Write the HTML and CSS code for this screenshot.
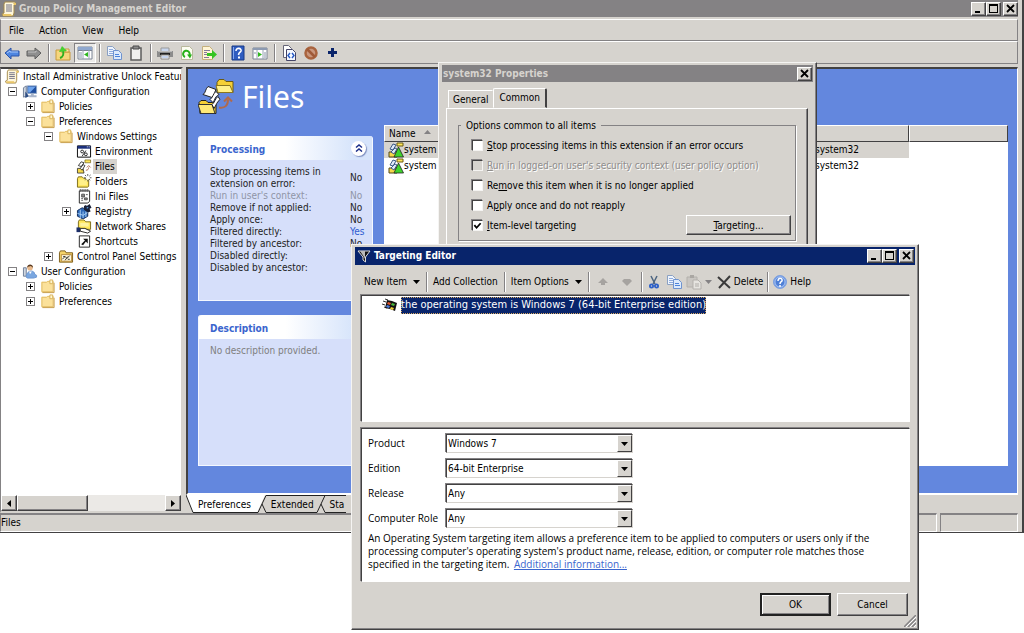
FILE: index.html
```html
<!DOCTYPE html>
<html lang="en">
<head>
<meta charset="utf-8">
<title>Group Policy Management Editor</title>
<link rel="stylesheet" href="styles.css">
</head>
<body>
<svg class="sprite" aria-hidden="true">
  <symbol id="scroll" viewBox="0 0 16 16"><path d="M4 1h10l1 2-2 1v8l-1 3H2l-1-2 2-1V3z" fill="#fff7dc" stroke="#a48a4c"/><path d="M5 4h6M5 6h6M5 8h6M5 10h6" stroke="#6f6f86"/><path d="M2 13h8l1 2H2zM12 2h3v2h-2z" fill="#e9c567"/></symbol>
  <symbol id="folder" viewBox="0 0 16 16"><path d="M1 3h6l1-1h2v12H1z" fill="#f8dc86"/><path d="M1.500 3.500h5l1-1h6v11h-12z" fill="#fbe19a" stroke="#e2bd66"/><path d="M10 1h3v4h-3z" fill="#fff6cf" stroke="#d9b25a"/><path d="M14.500 4v10.500H2" fill="none" stroke="#c59a45"/></symbol>
  <symbol id="computer" viewBox="0 0 16 16"><path d="M5 2h10v8H5z" fill="#1f4e9e" stroke="#8fa5c5"/><path d="M6 3h8L8 9H6z" fill="#6fa4ec"/><path d="M9 10h3v2h3v2H7v-2h2z" fill="#a7b4ca"/><path d="M1 4l3-2v11l-3 1z" fill="#cfd6e0" stroke="#6d7c95"/><path d="M3 8l4 5-4 2z" fill="#2c4c83"/></symbol>
  <symbol id="user" viewBox="0 0 16 16"><path d="M1 4h3v9H1z" fill="#cfd6e0" stroke="#6d7c95"/><circle cx="8" cy="4" r="3" fill="#e8b98c"/><path d="M5 4c0-5 7-4 6 0l-2-2-3 1z" fill="#5a3b22"/><path d="M4 14c0-8 9-8 9-3l2 1v2l-3 1H5z" fill="#7aa7e0" stroke="#6c96d2"/><path d="M7 8l1 3 2-3z" fill="#fff"/></symbol>
  <symbol id="env" viewBox="0 0 16 16"><path d="M1 2h14v12H1z" fill="#fff" stroke="#000"/><path d="M1 2h14v3H1z" fill="#1b2f7c"/><path d="M11 3h1M13 3h1" stroke="#fff"/><circle cx="6" cy="8" r="1.500" fill="none" stroke="#222"/><circle cx="10" cy="11" r="1.500" fill="none" stroke="#222"/><path d="M10 7l-4 6" stroke="#222"/></symbol>
  <symbol id="files" viewBox="0 0 36 36"><path d="M19 4l2-3h5l2 2h7v11H19z" fill="#f5cf35" stroke="#6a5a14"/><path d="M18 7h14l3 7H20z" fill="#fff08a" stroke="#8a7620"/><path d="M1 24l2-2h5l2 2h8v11H2z" fill="#f5cf35" stroke="#222"/><path d="M0 26h14l3 9H3z" fill="#ffe976" stroke="#333"/><path d="M10 8l8 3c-2 3-1 6-4 8l-9-3c3-2 2-5 5-8z" fill="#fff" stroke="#222"/><path d="M18 13c-3 2-3 6-6 8l3 3c2-3 2-6 6-8zM20 18c-3 2-3 6-6 8l2 4c2-3 3-7 6-9z" fill="#fff" stroke="#222"/><path d="M21 29c6 1 9-2 9-8M26 23l4-4 4 4" fill="none" stroke="#b06a4c" stroke-width="2"/></symbol>
  <symbol id="filessmall" viewBox="0 0 16 16"><path d="M9 1h6v3H9z" fill="#ffe65a" stroke="#6a5a14" stroke-width=".7"/><path d="M1 10h6l1 5H1z" fill="#f6d84a" stroke="#222" stroke-width=".8"/><path d="M5 3l3 1-3 4-3-1zM7 6l2 1-3 5-2-2z" fill="#fff" stroke="#222" stroke-width=".9"/><path d="M10 12c2 0 3-1 3-3M11 9l2-2 2 2" fill="none" stroke="#b06a4c"/></symbol>
  <symbol id="newfolder" viewBox="0 0 16 16"><path d="M1 5l1-2h4l2 2h5v8l-1 1H1z" fill="#ffe65a" stroke="#7b6a18"/><path d="M3 6h8v6H3z" fill="#fff08a"/><path d="M12 0v8M8 4h8M9 1l6 6M15 1L9 7" stroke="#555" stroke-dasharray="2 1"/><circle cx="12" cy="4" r="2" fill="#fff"/></symbol>
  <symbol id="ini" viewBox="0 0 16 16"><path d="M3 2h11v11l-2 2H3z" fill="#fff" stroke="#222"/><path d="M4 0v3M6 0v3M8 0v3M10 0v3M12 0v3" stroke="#555"/><path d="M5.500 5.500h3v3h-3zM8.500 9.500h3v2h-3z" fill="#888" stroke="#555"/><path d="M10 6h2M5 10h2M5 12h2" stroke="#555"/></symbol>
  <symbol id="registry" viewBox="0 0 16 16"><path d="M1 7l5-3 6 2v7l-5 3-6-3z" fill="#2d68b8" stroke="#102a58"/><path d="M1 10l6 2 5-3M4 6v9M7 8v7M10 8v6" fill="none" stroke="#a9d0f5"/><path d="M8 2l2-1 1 1 3-2 2 4-2 1 1 3-3 1-4-3z" fill="#182038"/><path d="M11 3l2 1-2 1z" fill="#5fa3ea"/></symbol>
  <symbol id="share" viewBox="0 0 16 16"><path d="M2 3l1-2h5l2 2h5v8H2z" fill="#ffe65a" stroke="#7b6a18"/><path d="M4 4h9v4H4z" fill="#fff3a0"/><path d="M0 9h4v5H0z" fill="#1c2f6a"/><path d="M4 10h5l4 2 2 1-3 2-8-2z" fill="#fff" stroke="#222"/></symbol>
  <symbol id="shortcut" viewBox="0 0 16 16"><path d="M3 2h11v12H3z" fill="#fff" stroke="#222"/><path d="M7 5h5v5l-2-2-3 4-2-1 4-4z" fill="#111"/></symbol>
  <symbol id="cpanel" viewBox="0 0 16 16"><path d="M1 4l1-2h5l1 2h7v10H1z" fill="#f6d469" stroke="#7b5b18"/><path d="M3 6h11v7H3z" fill="#fff8dd" stroke="#b58a3c"/><path d="M4 11l3-3 2 2 3-3M7 12l3-4M5 8h2M10 11h2" fill="none" stroke="#333"/></symbol>
  <symbol id="back" viewBox="0 0 16 16"><path d="M1 8l6-5v3h8v5H7v3z" fill="#4f86e0" stroke="#2c55a8"/><path d="M3 8l3-2v1h8" fill="none" stroke="#a8c8fa"/></symbol>
  <symbol id="forward" viewBox="0 0 16 16"><path d="M15 8L9 3v3H1v5h8v3z" fill="#8f8f8f" stroke="#5e5e5e"/><path d="M2 7h8V6" fill="none" stroke="#c4c4c4"/></symbol>
  <symbol id="upfolder" viewBox="0 0 16 16"><path d="M1 5h4l1 2h9v8H1z" fill="#f6d67c" stroke="#c89a3c"/><path d="M10 4h4v3h-4z" fill="#fbe7a4" stroke="#c89a3c"/><path d="M5 13c3-1 4-4 3-7" fill="none" stroke="#2fae20" stroke-width="2"/><path d="M4 7l3-6 5 5z" fill="#48d030"/></symbol>
  <symbol id="treepane" viewBox="0 0 16 16"><path d="M1 2h14v12H1z" fill="#fff" stroke="#7b8494"/><path d="M1 2h14v3H1z" fill="#8fa8cf"/><path d="M1 5.500h14" stroke="#7b8494"/><path d="M6 5v9M12 5v9" stroke="#9aa4b6"/><path d="M2 8h3M2 10h3M2 12h3" stroke="#8894a8"/><path d="M11 7v5L7 9.500z" fill="#2fb81e"/></symbol>
  <symbol id="actionpane" viewBox="0 0 16 16"><path d="M1 3h14v11H1z" fill="#fff" stroke="#7b8494"/><path d="M1 3h14v2H1z" fill="#8d9bb2"/><path d="M5 5v9M11 5v9" stroke="#9aa4b6"/><path d="M12 8h2M12 10h2M12 12h2M2 8h2" stroke="#8894a8"/><path d="M6 7v5l4-2.500z" fill="#2fb81e"/></symbol>
  <symbol id="copy" viewBox="0 0 16 16"><path d="M1.500 1.500h5l3 3v6h-8z" fill="#eef4fd" stroke="#8aa0c2"/><path d="M3 4.500h4M3 6.500h5M3 8.500h5" stroke="#8fabdd"/><path d="M7.500 5.500h5l3 3v6h-8z" fill="#dceafc" stroke="#6f93cf"/><path d="M9 9.500h4M9 11.500h5" stroke="#4d83db"/></symbol>
  <symbol id="clipboard" viewBox="0 0 16 16"><path d="M3 3h10v12H3z" fill="#f0f0ee" stroke="#5c5c5c" stroke-width="1.500"/><path d="M5 1h6v3H5z" fill="#8c8c8c" stroke="#4b4b4b"/></symbol>
  <symbol id="printer" viewBox="0 0 16 16"><path d="M4 3h8v4H4z" fill="#c8d6ee" stroke="#999"/><path d="M0 6h16v6H0z" fill="#8c8c8c"/><path d="M1 6h14v1H1z" fill="#bbb"/><path d="M3 8h10v2H3z" fill="#222"/><path d="M4 10h8v4H4z" fill="#fff" stroke="#888"/><path d="M5 12h6" stroke="#8aa8de"/></symbol>
  <symbol id="refresh" viewBox="0 0 16 16"><path d="M2.500 1.500h8l3 3v10h-11z" fill="#fdfdf2" stroke="#b9b99d"/><path d="M6 12a3.300 3.300 0 1 1 4-1" fill="none" stroke="#26b018" stroke-width="2"/><path d="M8 9.500h5l-2 4z" fill="#26b018"/></symbol>
  <symbol id="export" viewBox="0 0 16 16"><path d="M1.500 1.500h7l3 3v10h-10z" fill="#fff5d5" stroke="#c4b07c"/><path d="M3 5.500h6M3 7.500h3M3 9.500h3M3 12.500h5" stroke="#857a99"/><path d="M6 8h5V5l5 4.500-5 4.500v-3H6z" fill="#35c522"/></symbol>
  <symbol id="helpbook" viewBox="0 0 16 16"><path d="M2 1h12v14H2z" fill="#2f5cc0" stroke="#193a86"/><path d="M3 2h1v12H3z" fill="#84a8ee"/><path d="M6 6c0-4 6-3 5 0-1 2-2 1-2.500 4" fill="none" stroke="#fff" stroke-width="1.600"/><path d="M8 11.500h2v2H8z" fill="#fff"/></symbol>
  <symbol id="code" viewBox="0 0 16 16"><path d="M2.500.5h5l3 3v9h-8z" fill="#fff" stroke="#667"/><path d="M5.500 4.500h6l3 3v8h-9z" fill="#f4f8ff" stroke="#446"/><path d="M9 8l-2 2.500L9 13M11 8l2 2.500-2 2.500" fill="none" stroke="#2458c4" stroke-width="1.400"/></symbol>
  <symbol id="no" viewBox="0 0 16 16"><circle cx="8" cy="8" r="5.500" fill="#c9977e" stroke="#a9643f" stroke-width="2.500"/><path d="M4 4l8 8" stroke="#a05a38" stroke-width="2.500"/></symbol>
  <symbol id="plus" viewBox="0 0 16 16"><path d="M6 3h3v3h3v3H9v3H6V9H3V6h3z" fill="#0a246a"/></symbol>
  <symbol id="listitem" viewBox="0 0 16 16"><path d="M1 10h8v5H1z" fill="#f6d84a" stroke="#55481a"/><path d="M5 2l3 1-3 5-3-1zM7 6l2 1-3 5-3-2z" fill="#dfe9fa" stroke="#3c5a86"/><path d="M9 1h6v3H9z" fill="#ffe65a" stroke="#6a5a14"/><path d="M10.500 5l5 10H6z" fill="#3fd42c" stroke="#222" stroke-width=".8"/></symbol>
  <symbol id="funnel" viewBox="0 0 16 16"><path d="M2 3h12L9.500 9v5L7 12V9z" fill="#111" stroke="#ddd"/><path d="M4 3h5v8L8 9z" fill="#bbb"/></symbol>
  <symbol id="arrowup" viewBox="0 0 16 16"><path d="M8 4l5 5h-3v2H6V9H3z" fill="#a6a3a0"/></symbol>
  <symbol id="arrowdown" viewBox="0 0 16 16"><path d="M8 12L3 7l2-2h6l2 2z" fill="#a6a3a0"/></symbol>
  <symbol id="cut" viewBox="0 0 16 16"><path d="M5 2l4 8M11 2L7 10" stroke="#4c6480" stroke-width="1.500"/><circle cx="5.500" cy="12" r="1.600" fill="none" stroke="#2c5fc8" stroke-width="1.800"/><circle cx="10.500" cy="12" r="1.600" fill="none" stroke="#2c5fc8" stroke-width="1.800"/></symbol>
  <symbol id="paste" viewBox="0 0 16 16"><path d="M1 3h10v10H1z" fill="#c9c6c2" stroke="#b3b0ac"/><path d="M4 1h4v3H4z" fill="#aaa7a3"/><path d="M7 6h5l3 3v6H7z" fill="#e6e4e0" stroke="#b3b0ac"/><path d="M9 10h4M9 12h4" stroke="#b0ada9"/></symbol>
  <symbol id="delete" viewBox="0 0 16 16"><path d="M2 3l12 11M14 2L3 14" stroke="#3a3a3a" stroke-width="2"/></symbol>
  <symbol id="help" viewBox="0 0 16 16"><circle cx="8" cy="8" r="6.500" fill="#6f9ae6" stroke="#7da0de"/><circle cx="8" cy="8" r="5" fill="#4e7fd6" stroke="#c6d8f6" stroke-width=".7"/><path d="M6 7c0-4 5-3 4 0-1 1-2 1-2 3M8 11v2" fill="none" stroke="#fff" stroke-width="1.500"/></symbol>
  <symbol id="winflag" viewBox="0 0 16 16"><path d="M1 4l3 1M0 7l3 1M2 10l3 1M3 2l3 1" stroke="#333"/><path d="M5 3l5 1 5 2-2 8-5-2-5-1z" fill="#111"/><path d="M6 5l3 1-1 2-3-1z" fill="#e0542c"/><path d="M10 6l3 1-1 2-3-1z" fill="#49b83a"/><path d="M5 8l3 1-1 2-3-1z" fill="#4b7ce0"/><path d="M9 10l3 1-1 2-3-1z" fill="#f2cf3a"/></symbol>
  <symbol id="min" viewBox="0 0 10 10"><path d="M1 7h5v2H1z" fill="#000"/></symbol>
  <symbol id="max" viewBox="0 0 10 10"><path d="M0 0h9v9H0zM1 2v6h7V2z" fill="#000" fill-rule="evenodd"/></symbol>
  <symbol id="close" viewBox="0 0 10 10"><path d="M1 1l7 7M8 1L1 8" stroke="#000" stroke-width="1.800"/></symbol>
  <symbol id="down" viewBox="0 0 7 4"><path d="M0 0h7L3.500 4z" fill="currentColor"/></symbol>
</svg>

<main class="app">
  <header class="titlebar inactive">
    <svg class="icon"><use href="#scroll"/></svg>
    <h1 class="title">Group Policy Management Editor</h1>
    <div class="winbtns">
      <button class="winbtn" aria-label="Minimize"><svg><use href="#min"/></svg></button>
      <button class="winbtn" aria-label="Maximize"><svg><use href="#max"/></svg></button>
      <button class="winbtn last" aria-label="Close"><svg><use href="#close"/></svg></button>
    </div>
  </header>
  <nav class="menubar">
    <button>File</button><button>Action</button><button>View</button><button>Help</button>
  </nav>
  <div class="toolbar">
    <button aria-label="Back"><svg class="icon"><use href="#back"/></svg></button>
    <button aria-label="Forward"><svg class="icon"><use href="#forward"/></svg></button>
    <i class="sep"></i>
    <button aria-label="Up"><svg class="icon"><use href="#upfolder"/></svg></button>
    <button class="pressed" aria-label="Show tree"><svg class="icon"><use href="#treepane"/></svg></button>
    <i class="sep"></i>
    <button aria-label="Copy"><svg class="icon"><use href="#copy"/></svg></button>
    <button aria-label="Paste"><svg class="icon"><use href="#clipboard"/></svg></button>
    <i class="sep"></i>
    <button aria-label="Print"><svg class="icon"><use href="#printer"/></svg></button>
    <button aria-label="Refresh"><svg class="icon"><use href="#refresh"/></svg></button>
    <button aria-label="Export list"><svg class="icon"><use href="#export"/></svg></button>
    <i class="sep"></i>
    <button aria-label="Help topics"><svg class="icon"><use href="#helpbook"/></svg></button>
    <button aria-label="Show action pane"><svg class="icon"><use href="#actionpane"/></svg></button>
    <i class="sep"></i>
    <button aria-label="View XML"><svg class="icon"><use href="#code"/></svg></button>
    <button aria-label="Disable"><svg class="icon"><use href="#no"/></svg></button>
    <button aria-label="Add"><svg class="icon"><use href="#plus"/></svg></button>
  </div>

  <div class="panes">
    <aside class="treepanel">
      <div class="tree">
        <div class="node root"><svg class="icon"><use href="#scroll"/></svg><span>Install Administrative Unlock Featur</span></div>
        <ul>
          <li><div class="node"><i class="exp"></i><svg class="icon"><use href="#computer"/></svg><span>Computer Configuration</span></div>
            <ul>
              <li><div class="node"><i class="exp plus"></i><svg class="icon"><use href="#folder"/></svg><span>Policies</span></div></li>
              <li><div class="node"><i class="exp"></i><svg class="icon"><use href="#folder"/></svg><span>Preferences</span></div>
                <ul>
                  <li><div class="node"><i class="exp"></i><svg class="icon"><use href="#folder"/></svg><span>Windows Settings</span></div>
                    <ul>
                      <li><div class="node"><i class="exp none"></i><svg class="icon"><use href="#env"/></svg><span>Environment</span></div></li>
                      <li><div class="node"><i class="exp none"></i><svg class="icon"><use href="#filessmall"/></svg><span class="current">Files</span></div></li>
                      <li><div class="node"><i class="exp none"></i><svg class="icon"><use href="#newfolder"/></svg><span>Folders</span></div></li>
                      <li><div class="node"><i class="exp none"></i><svg class="icon"><use href="#ini"/></svg><span>Ini Files</span></div></li>
                      <li><div class="node"><i class="exp plus"></i><svg class="icon"><use href="#registry"/></svg><span>Registry</span></div></li>
                      <li><div class="node"><i class="exp none"></i><svg class="icon"><use href="#share"/></svg><span>Network Shares</span></div></li>
                      <li><div class="node"><i class="exp none"></i><svg class="icon"><use href="#shortcut"/></svg><span>Shortcuts</span></div></li>
                    </ul>
                  </li>
                  <li><div class="node"><i class="exp plus"></i><svg class="icon"><use href="#cpanel"/></svg><span>Control Panel Settings</span></div></li>
                </ul>
              </li>
            </ul>
          </li>
          <li><div class="node"><i class="exp"></i><svg class="icon"><use href="#user"/></svg><span>User Configuration</span></div>
            <ul>
              <li><div class="node"><i class="exp plus"></i><svg class="icon"><use href="#folder"/></svg><span>Policies</span></div></li>
              <li><div class="node"><i class="exp plus"></i><svg class="icon"><use href="#folder"/></svg><span>Preferences</span></div></li>
            </ul>
          </li>
        </ul>
      </div>
      <div class="hscroll">
        <button aria-label="Scroll left"><svg class="tri" viewBox="0 0 4 7"><path d="M4 0v7L0 3.500z"/></svg></button>
        <i class="thumb"></i>
        <button class="end" aria-label="Scroll right"><svg class="tri" viewBox="0 0 4 7"><path d="M0 0v7l4-3.500z"/></svg></button>
      </div>
    </aside>

    <section class="result">
      <div class="canvas">
        <div class="heading"><svg class="bigicon"><use href="#files"/></svg><h2>Files</h2></div>
        <div class="body">
          <div class="cards">
            <section class="card">
              <header><h3>Processing</h3><button class="chev" aria-label="Collapse"><svg viewBox="0 0 8 8"><path d="M1 3.500L4 1l3 2.500M1 7.500L4 5l3 2.500" fill="none" stroke="#1c2f8a" stroke-width="1.500"/></svg></button></header>
              <table>
                <tr><th>Stop processing items in<br>extension on error:</th><td>No</td></tr>
                <tr class="dim"><th>Run in user's context:</th><td>No</td></tr>
                <tr><th>Remove if not applied:</th><td>No</td></tr>
                <tr><th>Apply once:</th><td>No</td></tr>
                <tr><th>Filtered directly:</th><td class="yes">Yes</td></tr>
                <tr><th>Filtered by ancestor:</th><td>No</td></tr>
                <tr><th>Disabled directly:</th><td></td></tr>
                <tr><th>Disabled by ancestor:</th><td></td></tr>
              </table>
            </section>
            <section class="card desc">
              <header><h3>Description</h3></header>
              <p>No description provided.</p>
            </section>
          </div>
          <div class="list">
            <table>
              <colgroup><col class="c-name"><col class="c-target"><col></colgroup>
              <thead><tr><th>Name <svg class="sort" viewBox="0 0 7 4"><path d="M0 4h7L3.500 0z" fill="#848284"/></svg></th><th></th><th></th></tr></thead>
              <tbody>
                <tr class="sel"><td><svg class="icon"><use href="#listitem"/></svg>system</td><td>system32</td><td></td></tr>
                <tr><td><svg class="icon"><use href="#listitem"/></svg>system</td><td>system32</td><td></td></tr>
              </tbody>
            </table>
          </div>
        </div>
      </div>
      <div class="viewtabs">
        <svg class="slant first" viewBox="0 0 9 18"><path d="M0 0h9v18H7z" fill="#fff"/><path d="M0 0l7 17.500h2" fill="none" stroke="#222"/></svg>
        <button class="on">Preferences</button>
        <svg class="slant" viewBox="0 0 12 18"><path d="M0 0h8L0 18z" fill="#fff"/><path d="M0 17.500h1L9 .5h3M5 9l4 8.500h3" fill="none" stroke="#222"/></svg>
        <button>Extended</button>
        <svg class="slant" viewBox="0 0 12 18"><path d="M0 17.500h1L9 .5h3M0 .5h9M5 9l4 8.500h3" fill="none" stroke="#222"/></svg>
        <button>Sta</button>
      </div>
    </section>
  </div>
  <footer class="status"><span class="grow">Files</span><span class="cell"></span></footer>
</main>

<section class="dialog props" role="dialog" aria-label="system32 Properties">
  <header class="titlebar inactive">
    <h2 class="title">system32 Properties</h2>
    <div class="winbtns"><button class="winbtn" aria-label="Close"><svg><use href="#close"/></svg></button></div>
  </header>
  <div class="tabs"><button>General</button><button class="on">Common</button></div>
  <div class="tabpage">
    <fieldset>
      <legend>Options common to all items</legend>
      <label><input type="checkbox"><span><u>S</u>top processing items in this extension if an error occurs</span></label>
      <label class="off"><input type="checkbox" disabled><span><u>R</u>un in logged-on user's security context (user policy option)</span></label>
      <label><input type="checkbox"><span>Re<u>m</u>ove this item when it is no longer applied</span></label>
      <label><input type="checkbox"><span>A<u>p</u>ply once and do not reapply</span></label>
      <div class="pair">
        <label><input type="checkbox" checked><span><u>I</u>tem-level targeting</span></label>
        <button class="btn"><span><u>T</u>argeting...</span></button>
      </div>
    </fieldset>
  </div>
</section>

<section class="dialog editor" role="dialog" aria-label="Targeting Editor">
  <header class="titlebar">
    <svg class="icon"><use href="#funnel"/></svg>
    <h2 class="title">Targeting Editor</h2>
    <div class="winbtns">
      <button class="winbtn" aria-label="Minimize"><svg><use href="#min"/></svg></button>
      <button class="winbtn" aria-label="Maximize"><svg><use href="#max"/></svg></button>
      <button class="winbtn last" aria-label="Close"><svg><use href="#close"/></svg></button>
    </div>
  </header>
  <div class="edbar">
    <button>New Item <svg class="dd"><use href="#down"/></svg></button>
    <i class="sep"></i>
    <button>Add Collection</button>
    <i class="sep"></i>
    <button>Item Options <svg class="dd"><use href="#down"/></svg></button>
    <i class="sep"></i>
    <button disabled aria-label="Move up"><svg class="icon"><use href="#arrowup"/></svg></button>
    <button disabled aria-label="Move down"><svg class="icon"><use href="#arrowdown"/></svg></button>
    <i class="sep"></i>
    <button class="tight" aria-label="Cut"><svg class="icon"><use href="#cut"/></svg></button>
    <button class="tight" aria-label="Copy"><svg class="icon"><use href="#copy"/></svg></button>
    <button class="tight" disabled aria-label="Paste"><svg class="icon"><use href="#paste"/></svg><svg class="dd dim"><use href="#down"/></svg></button>
    <button class="tight"><svg class="icon"><use href="#delete"/></svg>Delete</button>
    <i class="sep"></i>
    <button class="tight"><svg class="icon"><use href="#help"/></svg>Help</button>
  </div>
  <div class="well items">
    <div class="item"><svg class="icon"><use href="#winflag"/></svg><span>the operating system is Windows 7 (64-bit Enterprise edition)</span></div>
  </div>
  <div class="well form">
    <div class="fields">
      <label for="product">Product</label><div class="combo"><select id="product"><option>Windows 7</option></select><i><svg class="dd"><use href="#down"/></svg></i></div>
      <label for="edition">Edition</label><div class="combo"><select id="edition"><option>64-bit Enterprise</option></select><i><svg class="dd"><use href="#down"/></svg></i></div>
      <label for="release">Release</label><div class="combo"><select id="release"><option>Any</option></select><i><svg class="dd"><use href="#down"/></svg></i></div>
      <label for="role">Computer Role</label><div class="combo"><select id="role"><option>Any</option></select><i><svg class="dd"><use href="#down"/></svg></i></div>
    </div>
    <p>An Operating System targeting item allows a preference item to be applied to computers or users only if the processing computer's operating system's product name, release, edition, or computer role matches those specified in the targeting item. <a href="#">Additional information...</a></p>
  </div>
  <footer class="actions"><button class="btn default">OK</button><button class="btn">Cancel</button></footer>
  <svg class="grip" viewBox="0 0 12 12"><path d="M0 12L12 0M4 12l8-8M8 12l4-4" stroke="#848284" stroke-width="1.500"/><path d="M2 12L12 2M6 12l6-6M10 12l2-2" stroke="#fff"/></svg>
</section>
</body>
</html>
```
FILE: styles.css
```css
:root {
  --face: #d6d3ce;
  --shadow: #848284;
  --dark: #424142;
  --blue: #6387de;
  --navy: #08246b;
}
* { box-sizing: border-box; }
body {
  margin: 0;
  min-height: 100vh;
  position: relative;
  overflow: hidden;
  background: #fff;
  color: #000;
  font: 10px/15px "DejaVu Sans Condensed", "Noto Sans", sans-serif;
}
button, select, input { font: inherit; color: inherit; margin: 0; }
button { padding: 0; border: 0; background: none; white-space: nowrap; }
h1, h2, h3, p, ul { margin: 0; padding: 0; }
ul { list-style: none; }
svg { flex: none; display: block; }
.sprite { display: none; }
.icon { width: 16px; height: 16px; }
.dd { width: 7px; height: 4px; }

.titlebar { display: flex; align-items: center; height: 18px; background: var(--navy); color: #fff; padding: 0 2px; gap: 2px; }
.titlebar.inactive { background: var(--shadow); color: #d6d3ce; }
.title { flex: 1; font-size: 10px; line-height: 15px; font-weight: bold; }
.winbtns { display: flex; }
.winbtn {
  width: 15px; height: 14px; display: grid; place-items: center; background: var(--face);
  border: 1px solid; border-color: #fff var(--dark) var(--dark) #fff; box-shadow: inset -1px -1px var(--shadow);
}
.winbtn svg { width: 10px; height: 10px; }
.winbtn.last { margin-left: 2px; }

.app { display: flex; flex-direction: column; height: 533px; background: var(--face); padding-right: 4px; border-right: 2px solid var(--dark); border-bottom: 1px solid var(--dark); }
.app > .titlebar { height: 17px; padding-left: 1px; padding-right: 0; }
.menubar { display: flex; gap: 15px; height: 22px; margin-top: 2px; padding: 0 0 0 8px; border: 1px solid; border-color: #fff var(--shadow) var(--shadow) var(--shadow); }
.toolbar { display: flex; align-items: center; height: 23px; border: 1px solid; border-color: #fff var(--shadow) var(--shadow) var(--shadow); }
.toolbar button { width: 22px; height: 20px; display: grid; place-items: center; }
.toolbar .pressed { background: #ecebe9; border: 1px solid; border-color: var(--shadow) #fff #fff var(--shadow); }
.sep { flex: none; width: 2px; height: 18px; margin: 0 2px; border-left: 1px solid var(--shadow); border-right: 1px solid #fff; }
.toolbar .sep { margin: 0 2px 0 3px; }

.panes { flex: 1; min-height: 0; display: flex; gap: 3px; margin-top: 3px; }
.treepanel { flex: none; width: 183px; display: flex; flex-direction: column; background: #fff; border: 2px solid; border-color: var(--dark) var(--face) var(--face) var(--shadow); border-left-width: 1px; }
.tree { flex: 1; overflow: hidden; }
.tree ul ul { padding-left: 18px; }
.node { display: flex; align-items: center; height: 15px; padding-left: 7px; white-space: nowrap; }
.node.root { padding-left: 3px; }
.node .icon { margin: 0 3px 0 5px; height: 15px; }
.node.root .icon { margin: 0 3px 0 0; }
.node .current { background: var(--face); padding: 0 2px; margin-left: -2px; }
.exp { flex: none; width: 9px; height: 9px; border: 1px solid var(--shadow); background: linear-gradient(#000, #000) center / 5px 1px no-repeat; }
.exp.plus { background: linear-gradient(#000, #000) center / 5px 1px no-repeat, linear-gradient(#000, #000) center / 1px 5px no-repeat; }
.exp.none { border: 0; background: none; }
.hscroll { display: flex; height: 16px; background: #ebe9e6; }
.hscroll button, .thumb { background: var(--face); border: 1px solid; border-color: #fff var(--dark) var(--dark) #fff; box-shadow: inset -1px -1px var(--shadow); }
.hscroll button { width: 16px; display: grid; place-items: center; }
.hscroll .end { margin-left: auto; }
.thumb { width: 71px; }
.tri { width: 4px; height: 7px; }

.result { flex: 1; min-width: 0; display: flex; flex-direction: column; }
.canvas { flex: 1; min-height: 0; display: flex; flex-direction: column; background: var(--blue); border: 2px solid; border-color: var(--dark) #fff #fff var(--dark); border-right-width: 1px; padding: 8px 9px 27px 10px; }
.heading { display: flex; align-items: center; gap: 8px; height: 39px; }
.bigicon { width: 36px; height: 37px; }
.heading h2 { color: #fff; font: 30px/39px "Noto Sans", sans-serif; }
.body { flex: 1; display: flex; gap: 11px; margin-top: 9px; }
.cards { flex: none; width: 175px; display: flex; flex-direction: column; gap: 14px; padding-top: 11px; }
.card { background: #d6dffa; border: 1px solid #f4f8ff; border-width: 0 1px 1px; border-radius: 3px 3px 0 0; height: 165px; }
.card.desc { height: 151px; }
.card header { display: flex; align-items: center; justify-content: space-between; height: 24px; padding: 0 6px 0 11px; background: linear-gradient(90deg, #fff 50%, #d6e4fb 90%); border-radius: 3px 3px 0 0; }
.card h3 { font-size: 10px; line-height: 15px; color: #3a65ce; padding-top: 2px; }
.chev { width: 15px; height: 15px; border-radius: 50%; background: #fff; display: grid; place-items: center; box-shadow: 1px 1px 1px #7d8fc0; }
.chev svg { width: 8px; height: 8px; }
.card table { width: 100%; border-collapse: collapse; margin-top: 6px; line-height: 12px; color: #222; }
.card th, .card td { padding: 0; font-weight: normal; text-align: left; }
.card th { padding-left: 11px; }
.card td { width: 22px; }
.card .dim { color: #8f95a6; }
.card .yes { color: #2f5cd0; }
.card p { padding: 4px 11px; color: #808080; }
.list { flex: 1; min-width: 0; background: #fff; }
.list table { width: 100%; table-layout: fixed; border-collapse: separate; border-spacing: 0; }
.c-name { width: 431px; }
.c-target { width: 94px; }
.list th { height: 16px; padding: 0 4px; line-height: 15px; font-weight: normal; text-align: left; background: var(--face); border: 1px solid; border-color: #fff var(--dark) var(--dark) #fff; }
.list td { height: 16px; padding: 0; line-height: 16px; }
.list td .icon { display: inline-block; vertical-align: top; margin: 0 0 0 4px; }
.sort { display: inline-block; width: 7px; height: 4px; margin: 0 0 3px 6px; }
.sel td:not(:last-child) { background: var(--face); }
.viewtabs { display: flex; height: 18px; }
.viewtabs button { padding: 0 2px; border-bottom: 1px solid #222; border-top: 1px solid #222; }
.viewtabs .on { background: #fff; border-top-color: #fff; padding: 0 6px 0 3px; }
.slant { width: 12px; height: 18px; }
.slant.first { width: 9px; }

.status { flex: none; display: flex; gap: 3px; height: 19px; }
.status span { border: 1px solid; border-color: var(--shadow) #fff #fff var(--shadow); border-top-width: 2px; }
.grow { flex: 1; }
.cell { width: 78px; }

.dialog { position: absolute; background: var(--face); border: 1px solid; border-color: #f5f4f2 var(--dark) var(--dark) #f5f4f2; box-shadow: inset -1px -1px var(--shadow); padding: 2px 3px; }
.props { left: 438px; top: 62px; width: 379px; height: 200px; }
.props > .titlebar { height: 17px; padding: 0 1px; }
.tabs { display: flex; align-items: flex-end; height: 26px; padding-left: 6px; }
.tabs button { height: 18px; padding: 0 4px; border: 1px solid; border-color: #fff var(--face) transparent #fff; }
.tabs .on { height: 20px; padding: 0 5px 2px; border-right: 2px solid var(--dark); border-radius: 2px 2px 0 0; }
.tabpage { margin: 0 5px 0 4px; height: 150px; padding: 9px 11px; border: 1px solid; border-color: #fff var(--dark) var(--dark) #fff; box-shadow: inset -1px 0 var(--shadow); }
fieldset { margin: 0; padding: 2px 4px 5px 13px; border: 1px solid var(--shadow); box-shadow: 1px 1px #fff; }
legend { padding: 0 5px; margin-left: -11px; }
fieldset label { display: flex; align-items: center; gap: 4px; height: 20px; white-space: nowrap; }
fieldset input { appearance: none; flex: none; width: 11px; height: 11px; background: #fff; border: 1px solid; border-color: var(--dark) #f5f4f2 #f5f4f2 var(--dark); box-shadow: -1px -1px var(--shadow); }
fieldset input:disabled { background: var(--face); }
fieldset input:checked { background: #fff url("data:image/svg+xml,%3Csvg xmlns='http://www.w3.org/2000/svg' viewBox='0 0 10 10'%3E%3Cpath d='M1.500 4.500l2.500 3 4.500-5' fill='none' stroke='%23000' stroke-width='2'/%3E%3C/svg%3E"); }
.off { color: #8f8d8c; text-shadow: 1px 1px #fff; }
.pair { display: flex; justify-content: space-between; align-items: center; height: 20px; }
.btn { display: grid; place-items: center; width: 71px; height: 23px; background: var(--face); border: 1px solid; border-color: #fff var(--dark) var(--dark) #fff; box-shadow: inset -1px -1px var(--shadow); }
.pair .btn { width: 105px; height: 20px; }
.btn.default { border: 2px solid #222; box-shadow: inset 1px 1px #fff, inset -1px -1px var(--shadow); }

.editor { left: 351px; top: 244px; width: 568px; height: 386px; display: flex; flex-direction: column; }
.editor > .titlebar { height: 18px; padding: 0 1px; }
.edbar { display: flex; align-items: center; height: 30px; padding: 4px 5px 0 6px; }
.edbar button { display: flex; align-items: center; gap: 6px; padding: 0 4px; }
.edbar button:first-child { padding-left: 3px; }
.edbar .tight { padding: 0 2px; gap: 2px; }
.edbar .sep { height: 20px; margin: 0 1px 0 2px; }
.edbar .dim { color: #848284; }
.edbar .tight .dim { margin-left: 1px; }
.well { background: #fff; margin: 0 5px 0 6px; border: 1px solid; border-color: var(--dark) #fff #fff var(--dark); box-shadow: -1px -1px var(--shadow); }
.items { height: 129px; }
.item { display: flex; align-items: center; gap: 3px; padding: 1px 0 0 20px; font-size: 11px; }
.item span { height: 17px; line-height: 16px; background: var(--navy); color: #fff; outline: 1px dotted #d6a860; outline-offset: -1px; }
.form { height: 155px; margin-top: 6px; padding: 5px 6px; }
.fields { display: grid; grid-template-columns: 78px minmax(0, 187px); gap: 6px 0; align-items: center; }
.fields label, .form p { font-family: "Open Sans", sans-serif; }
.combo { position: relative; display: flex; height: 19px; border: 1px solid; border-color: var(--dark) #d6d3ce #d6d3ce var(--dark); box-shadow: -1px -1px var(--shadow); }
.combo select { appearance: none; width: 100%; border: 0; border-radius: 0; padding: 0 18px 0 1px; background: #fff; }
.combo i { position: absolute; top: 0; right: 0; bottom: 0; width: 15px; display: grid; place-items: center; pointer-events: none; background: var(--face); border: 1px solid; border-color: #fff var(--dark) var(--dark) #fff; }
.form p { line-height: 13px; margin-top: 4px; }
.form a { color: #3a65ce; margin-left: 2px; }
.actions { display: flex; justify-content: flex-end; gap: 6px; padding: 11px 7px; }
.grip { position: absolute; right: 2px; bottom: 2px; width: 12px; height: 12px; }
```
